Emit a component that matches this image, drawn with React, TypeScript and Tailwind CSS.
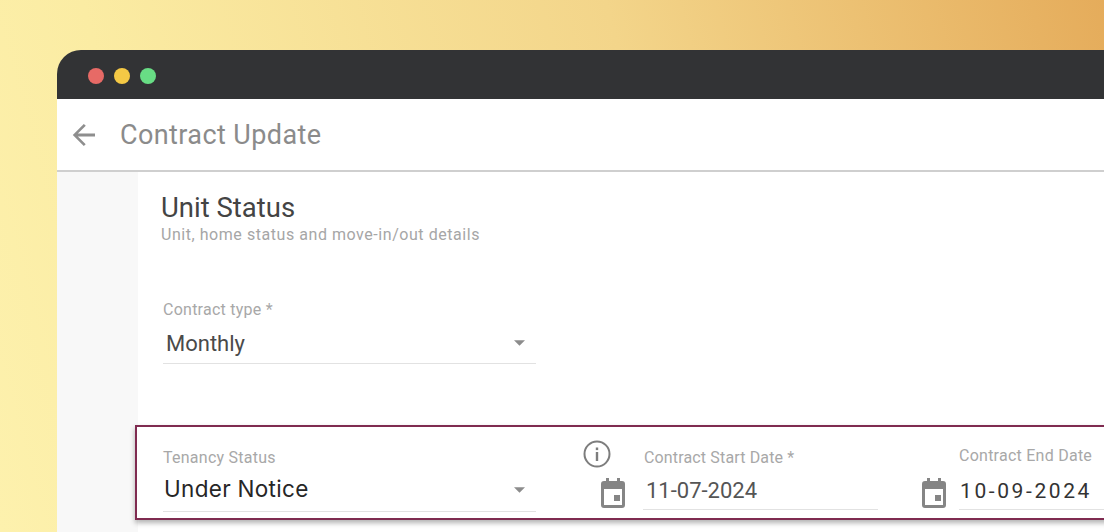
const ROBOTO = 'font-[Roboto,sans-serif]'

function Dropdown({ label, value, highlighted }: { label: string; value: string; highlighted?: boolean }) {
  return (
    <div className="w-[373px] shrink-0 border-b border-[#e2e2e2]">
      <div className="h-[18px] text-[16px] leading-[18px] tracking-[0.25px] text-[#a8a8a8]">{label}</div>
      <div className={highlighted ? 'mt-[7px] flex h-[37px] justify-between pl-[1px] pr-[11px]' : 'mt-[10px] flex h-[34px] justify-between pl-[3px] pr-[11px]'}>
        <span className={highlighted ? "font-['Inter',sans-serif] text-[22.5px] leading-[30px] tracking-[0.3px] text-[#262626]" : 'text-[22px] leading-[30px] text-[#4a4a4a]'}>{value}</span>
        <svg width="11" height="6" viewBox="0 0 12 6" className={highlighted ? 'mt-[13px]' : 'mt-[11px]'}><path d="M0 0h12L6 6z" fill="#8c8c8c" /></svg>
      </div>
    </div>
  )
}

function CalendarIcon() {
  return (
    <svg width="24" height="30" viewBox="0 0 24 30" fill="#858585" className="mt-[29px] shrink-0">
      <path d="M5 0h3v3h8V0h3v3h2a3 3 0 0 1 3 3v21a3 3 0 0 1-3 3H3a3 3 0 0 1-3-3V6a3 3 0 0 1 3-3h2zM3 11v16h18V11z" fillRule="evenodd" />
      <rect x="13" y="17" width="6" height="6" />
    </svg>
  )
}

function DateField({ label, value, wide }: { label: string; value: string; wide?: boolean }) {
  return (
    <div className={wide ? 'ml-[13px] w-[200px] shrink-0 border-b border-[#e2e2e2]' : 'ml-[18px] w-[235px] shrink-0 border-b border-[#e2e2e2]'}>
      <div className={wide ? 'h-[24px] text-[16px] leading-[14px] tracking-[0.25px] text-[#a8a8a8]' : 'h-[24px] pl-[1px] text-[16px] leading-[18px] tracking-[0.15px] text-[#a8a8a8]'}>{label}</div>
      <div className={wide ? 'h-[36px] pl-[1px] text-[21px] leading-[36px] tracking-[2.6px] text-[#333333]' : 'h-[36px] pl-[3px] text-[22px] leading-[36px] text-[#555555]'}>{value}</div>
    </div>
  )
}

export default function App() {
  return (
    <div className={`${ROBOTO} flex h-[532px] w-[1104px] flex-col overflow-hidden bg-[linear-gradient(75deg,#fdf1ad_0%,#fbeca3_18%,#f3d58a_60%,#e5ac5b_100%)] pl-[57px] pt-[50px]`}>
      <div className="flex h-[49px] shrink-0 items-center gap-[10px] rounded-tl-[24px] bg-[#323335] pl-[31px] pt-[2px]">
        <span className="size-4 rounded-full bg-[#e76a66]" />
        <span className="size-4 rounded-full bg-[#f5c945]" />
        <span className="size-4 rounded-full bg-[#68dd85]" />
      </div>
      <div className="flex h-[73px] shrink-0 items-center border-b-2 border-[#cfcfcf] bg-white pl-[15px] pt-[1px]">
        <svg width="24" height="24" viewBox="0 0 24 24" fill="#8e8e8e"><path d="M23 10.6H5.9l7.9-7.9L11.8 1 .8 12l11 11 1.9-1.8-7.8-7.8H23z" /></svg>
        <h1 className="ml-[24px] text-[27px] leading-none tracking-[0.4px] text-[#8b8b8b]">Contract Update</h1>
      </div>
      <div className="flex flex-1 bg-[#f8f8f8]">
        <div className="w-[81px] shrink-0" />
        <main className="min-w-0 flex-1 bg-white pl-[23px] pt-[21px]">
          <h2 className="text-[27.5px] leading-[30px] text-[#444444]">Unit Status</h2>
          <p className="mt-[3px] text-[16px] leading-[18px] tracking-[0.55px] text-[#a6a6a6]">Unit, home status and move-in/out details</p>
          <div className="ml-[2px] mt-[57px]">
            <Dropdown label="Contract type *" value="Monthly" />
          </div>
          <div className="-ml-[26px] -mr-[20px] mt-[61px] flex h-[95px] items-start border-2 border-[#7f2b50] bg-white pl-[26px] pt-[22px] shadow-[0_3px_5px_rgba(0,0,0,0.3)]">
            <Dropdown label="Tenancy Status" value="Under Notice" highlighted />
            <div className="relative ml-[65px] flex shrink-0">
              <svg width="28" height="28" viewBox="0 0 28 28" fill="none" className="absolute -left-[18px] -top-[9px]">
                <circle cx="14" cy="14" r="12.5" stroke="#7d7d7d" strokeWidth="2" />
                <rect x="12.8" y="12" width="2.4" height="9" fill="#7d7d7d" />
                <rect x="12.8" y="7.5" width="2.4" height="2.6" fill="#7d7d7d" />
              </svg>
              <CalendarIcon />
            </div>
            <DateField label="Contract Start Date *" value="11-07-2024" />
            <div className="ml-[44px] flex shrink-0">
              <CalendarIcon />
            </div>
            <DateField label="Contract End Date" value="10-09-2024" wide />
          </div>
        </main>
      </div>
    </div>
  )
}
